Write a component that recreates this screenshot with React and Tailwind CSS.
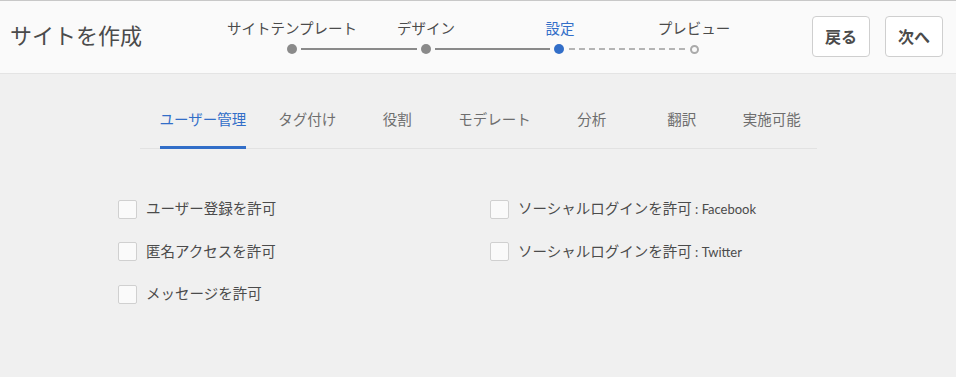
import React from 'react';

const FONT = { fontFamily: 'Lato, "Noto Sans CJK JP", sans-serif' };

const STEPS = [
  { label: 'サイトテンプレート', state: 'done' },
  { label: 'デザイン', state: 'done' },
  { label: '設定', state: 'current' },
  { label: 'プレビュー', state: 'todo' },
];

const TABS = ['ユーザー管理', 'タグ付け', '役割', 'モデレート', '分析', '翻訳', '実施可能'];

const Dot = ({ state }) => {
  if (state === 'current') return <span className="block w-[10px] h-[10px] rounded-full bg-[#326ec8]" />;
  if (state === 'todo') return <span className="block w-[9px] h-[9px] rounded-full border-2 border-[#aaaaaa] bg-[#fafafa]" />;
  return <span className="block w-[10px] h-[10px] rounded-full bg-[#8a8a8a]" />;
};

const Stepper = () => (
  <div className="ml-[83px] w-[536px] flex flex-col">
    <div className="grid grid-cols-4 h-[22px] mt-[17px]">
      {STEPS.map(s => (
        <div
          key={s.label}
          className={`text-center text-[14.5px] leading-[22px] ${s.state === 'current' ? 'text-[#326ec8]' : 'text-[#4b4b4b]'}`}
        >
          {s.label}
        </div>
      ))}
    </div>
    <div className="flex items-center px-[62px] mt-[4px] h-[10px]">
      <Dot state="done" />
      <span className="flex-1 mx-[4px] h-[2px] bg-[#8a8a8a]" />
      <Dot state="done" />
      <span className="flex-1 mx-[4px] h-[2px] bg-[#8a8a8a]" />
      <Dot state="current" />
      <span className="flex-1 mx-[5px] h-0 border-t-2 border-dashed border-[#b4b4b4]" />
      <Dot state="todo" />
    </div>
  </div>
);

const Checkbox = ({ label, suffix }) => (
  <label className="flex items-center h-[20px]">
    <span className="block w-[19px] h-[19px] rounded-[2px] border border-[#d0d0d0] bg-[#fafafa]" />
    <span className="ml-[9px] text-[14.5px] text-[#4b4b4b]">
      {label}
      {suffix && <span className="text-[13px]"> : {suffix}</span>}
    </span>
  </label>
);

export default function App() {
  return (
    <div className="w-[956px] h-[377px] bg-[#f0f0f0] overflow-hidden" style={FONT}>
      {/* Header */}
      <div className="h-[74px] bg-[#fafafa] border-t border-t-[#c8c8c8] border-b border-b-[#e4e4e4] flex items-start">
        <h1 className="ml-[10px] mt-[20px] text-[22px] leading-[30px] text-[#4b4b4b] font-normal">サイトを作成</h1>
        <Stepper />
        <div className="ml-auto mr-[13px] mt-[15px] flex gap-[15px]">
          <button className="w-[58px] h-[41px] rounded-[4px] border border-[#cfcfcf] bg-white text-[16px] font-bold text-[#4b4b4b]">戻る</button>
          <button className="w-[58px] h-[41px] rounded-[4px] border border-[#cfcfcf] bg-white text-[16px] font-bold text-[#4b4b4b]">次へ</button>
        </div>
      </div>

      {/* Tabs */}
      <div className="mx-auto w-[677px] mt-[35px] border-b border-[#e2e2e2] flex gap-[32px] pl-[20px]">
        {TABS.map((t, i) => (
          <div
            key={t}
            className={`min-w-[58px] text-center text-[14.5px] leading-[22px] pb-[15px] border-b-[3px] -mb-px ${
              i === 0 ? 'text-[#326ec8] border-[#326ec8]' : 'text-[#6e6e6e] border-transparent'
            }`}
          >
            {t}
          </div>
        ))}
      </div>

      {/* Settings */}
      <div className="grid grid-cols-[372px_1fr] pl-[118px] mt-[50px] gap-y-[22.5px]">
        <Checkbox label="ユーザー登録を許可" />
        <Checkbox label="ソーシャルログインを許可" suffix="Facebook" />
        <Checkbox label="匿名アクセスを許可" />
        <Checkbox label="ソーシャルログインを許可" suffix="Twitter" />
        <Checkbox label="メッセージを許可" />
      </div>
    </div>
  );
}
